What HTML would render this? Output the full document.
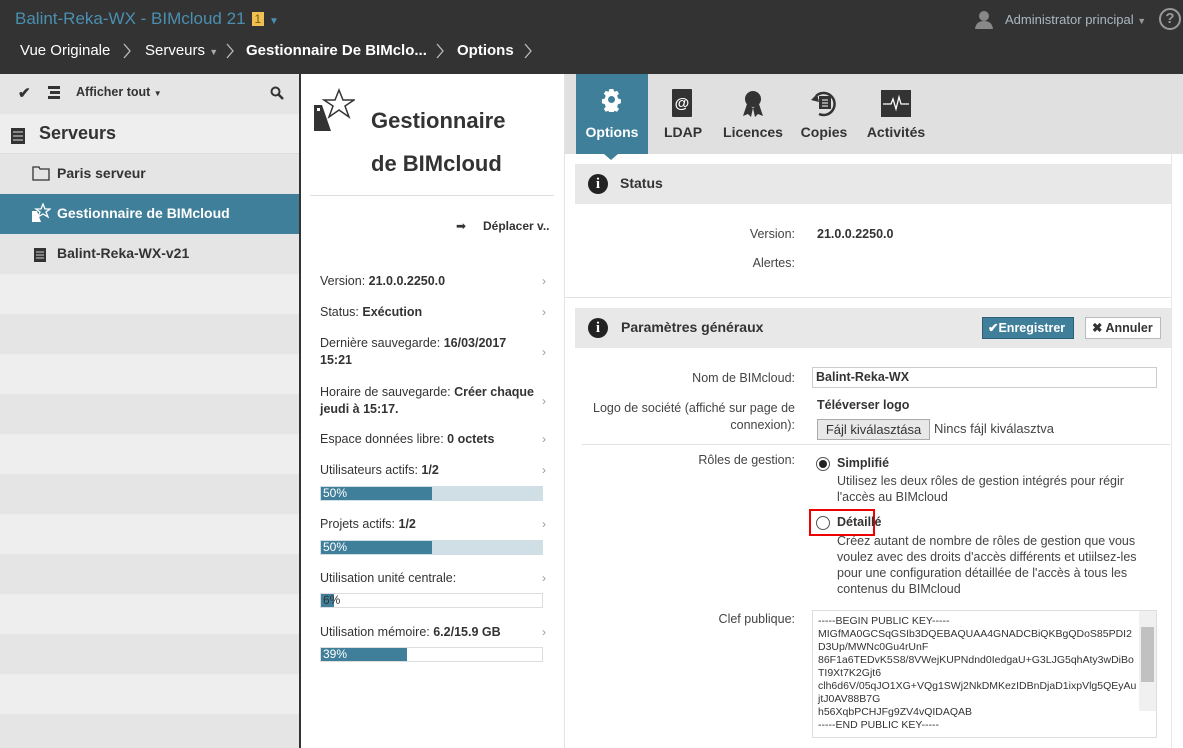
<!DOCTYPE html>
<html><head><meta charset="utf-8"><style>
*{box-sizing:border-box;margin:0;padding:0}
html,body{width:1183px;height:748px;overflow:hidden}
body{font-family:"Liberation Sans",sans-serif;font-size:13px;color:#333;background:#fff;position:relative}
.abs{position:absolute}
.hdr{left:0;top:0;width:1183px;height:74px;background:#333}
.title{left:15px;top:9px;font-size:17px;color:#4a8fb0}
.badge{display:inline-block;background:#f0c050;color:#7a5a10;font-size:12px;padding:0 3px;margin-left:6px;vertical-align:1px;line-height:14px}
.bc{top:42px;font-size:15px;color:#fff}
.chev{top:41px}
.side{left:0;top:74px;width:299px;height:674px;background:#eee}
.row{position:absolute;left:0;width:299px;height:40px}
.mid{left:301px;top:74px;width:264px;height:674px;background:#fff;border-right:1px solid #e3e3e3}
.kv{position:absolute;left:320px;width:226px;font-size:12.5px;line-height:17px}
.kv .ar{position:absolute;right:0;top:0;color:#999;font-size:12px}
.bar{position:absolute;left:320px;width:223px;height:15px;border:1px solid #ddd;background:#fff;font-size:12px;color:#fff;line-height:13px}
.bar i{display:block;height:13px;background:#3f7f9a;position:absolute;left:0;top:0}
.bar span{position:relative;padding-left:2px}
.tabs{left:565px;top:74px;width:618px;height:80px;background:#e0e0e0}
.tab{position:absolute;top:0;height:80px;text-align:center;font-size:14px;font-weight:bold;color:#333}
.tab .lb{position:absolute;top:50px;left:0;right:0}
.sec{position:absolute;left:575px;width:596px;height:40px;background:#e8e8e8}
.lbl{position:absolute;text-align:right;font-size:12.5px;color:#444;right:388px}
</style></head><body>
<div class="abs hdr"></div>
<div class="abs title">Balint-Reka-WX - BIMcloud 21<span class="badge">1</span> <span style="font-size:10px">▼</span></div>
<div class="abs bc" style="left:20px">Vue Originale</div>
<svg class="abs chev" style="left:122px" width="10" height="20"><path d="M2 3l6 7-6 7" fill="none" stroke="#bbb" stroke-width="1.3"/></svg>
<div class="abs bc" style="left:145px">Serveurs <span style="font-size:9px;color:#aaa">▼</span></div>
<svg class="abs chev" style="left:225px" width="10" height="20"><path d="M2 3l6 7-6 7" fill="none" stroke="#bbb" stroke-width="1.3"/></svg>
<div class="abs bc" style="left:246px;font-weight:bold">Gestionnaire De BIMclo...</div>
<svg class="abs chev" style="left:435px" width="10" height="20"><path d="M2 3l6 7-6 7" fill="none" stroke="#bbb" stroke-width="1.3"/></svg>
<div class="abs bc" style="left:457px;font-weight:bold">Options</div>
<svg class="abs chev" style="left:523px" width="10" height="20"><path d="M2 3l6 7-6 7" fill="none" stroke="#bbb" stroke-width="1.3"/></svg>
<svg class="abs" style="left:974px;top:10px" width="20" height="20"><circle cx="10" cy="6" r="5" fill="#888"/><path d="M1 19 Q2 11 10 11 Q18 11 19 19Z" fill="#888"/></svg>
<div class="abs" style="left:1005px;top:12px;color:#aab8c2;font-size:13px">Administrator principal <span style="font-size:9px;color:#999">▼</span></div>
<div class="abs" style="left:1159px;top:8px;width:22px;height:22px;border:2px solid #999;border-radius:50%;color:#999;text-align:center;font-size:15px;line-height:18px;font-weight:bold">?</div>

<div class="abs side">
<div class="row" style="top:0;background:#e5e5e5"></div>
<div class="row" style="top:40px;background:#eee;border-bottom:1px solid #ddd"></div>
<div class="row" style="top:80px;background:#e5e5e5"></div>
<div class="row" style="top:120px;background:#3f7f9a"></div>
<div class="row" style="top:160px;background:#e5e5e5"></div>
<div class="row" style="top:240px;background:#e5e5e5"></div>
<div class="row" style="top:320px;background:#e5e5e5"></div>
<div class="row" style="top:400px;background:#e5e5e5"></div>
<div class="row" style="top:480px;background:#e5e5e5"></div>
<div class="row" style="top:560px;background:#e5e5e5"></div>
<div class="row" style="top:640px;background:#e5e5e5"></div>
</div>
<div class="abs" style="left:299px;top:74px;width:2px;height:674px;background:#333"></div>
<div class="abs" style="left:18px;top:84px;font-size:15px;font-weight:bold">✔</div>
<svg class="abs" style="left:46px;top:86px" width="14" height="13"><rect x="2" y="0" width="12" height="3" fill="#333"/><rect x="4" y="5" width="10" height="3" fill="#333"/><rect x="2" y="10" width="12" height="3" fill="#333"/></svg>
<div class="abs" style="left:76px;top:85px;font-weight:bold;font-size:12.5px">Afficher tout <span style="font-size:8px">▼</span></div>
<svg class="abs" style="left:270px;top:86px" width="14" height="14"><circle cx="5.5" cy="5.5" r="4" stroke="#333" stroke-width="2" fill="none"/><path d="M8.5 8.5L13 13" stroke="#333" stroke-width="2.5"/></svg>
<svg class="abs" style="left:11px;top:128px" width="14" height="16"><rect width="14" height="16" fill="#333"/><path d="M2 4h10M2 8h10M2 12h10" stroke="#ddd" stroke-width="1"/></svg>
<div class="abs" style="left:39px;top:123px;font-size:18px;font-weight:bold">Serveurs</div>
<svg class="abs" style="left:32px;top:166px" width="18" height="15"><path d="M1 1h6l1 2h9v11H1Z" fill="none" stroke="#333" stroke-width="1.3"/></svg>
<div class="abs" style="left:57px;top:165px;font-size:14px;font-weight:bold">Paris serveur</div>
<svg class="abs" style="left:31px;top:203px" width="20" height="20"><path d="M1 8h5l4 11H1Z" fill="#fff"/><path d="M12 1l2 5h5l-4 3 2 5-5-3-5 3 2-5-4-3h5z" fill="none" stroke="#fff" stroke-width="1.3"/></svg>
<div class="abs" style="left:57px;top:205px;font-size:14px;font-weight:bold;color:#fff">Gestionnaire de BIMcloud</div>
<svg class="abs" style="left:34px;top:248px" width="12" height="14"><rect width="12" height="14" fill="#333"/><path d="M2 4h8M2 7h8M2 10h8" stroke="#ccc"/></svg>
<div class="abs" style="left:57px;top:245px;font-size:14px;font-weight:bold">Balint-Reka-WX-v21</div>

<div class="abs mid"></div>
<svg class="abs" style="left:313px;top:88px" width="42" height="44"><path d="M1 17h8l9 26H1Z" fill="#333"/><rect x="4" y="20" width="3" height="3" fill="#fff"/><path d="M26 2l4 10h11l-9 6 4 11-10-7-10 7 4-11-9-6h11z" fill="#fff" stroke="#333" stroke-width="1.5"/></svg>
<div class="abs" style="left:371px;top:99px;font-size:22px;font-weight:bold;line-height:43px">Gestionnaire<br>de BIMcloud</div>
<div class="abs" style="left:310px;top:195px;width:244px;height:1px;background:#ddd"></div>
<div class="abs" style="left:456px;top:219px;font-size:12px">➡</div>
<div class="abs" style="left:483px;top:219px;font-size:12px;font-weight:bold">Déplacer v..</div>
<div class="kv" style="top:273px">Version: <b>21.0.0.2250.0</b><span class="ar">›</span></div>
<div class="kv" style="top:304px">Status: <b>Exécution</b><span class="ar">›</span></div>
<div class="kv" style="top:335px">Dernière sauvegarde: <b>16/03/2017<br>15:21</b><span class="ar" style="top:9px">›</span></div>
<div class="kv" style="top:384px">Horaire de sauvegarde: <b>Créer chaque jeudi à 15:17.</b><span class="ar" style="top:9px">›</span></div>
<div class="kv" style="top:431px">Espace données libre: <b>0 octets</b><span class="ar">›</span></div>
<div class="kv" style="top:462px">Utilisateurs actifs: <b>1/2</b><span class="ar">›</span></div>
<div class="bar" style="top:486px;background:#d0dfe5;border-color:#d0dfe5"><i style="width:111px"></i><span>50%</span></div>
<div class="kv" style="top:516px">Projets actifs: <b>1/2</b><span class="ar">›</span></div>
<div class="bar" style="top:540px;background:#d0dfe5;border-color:#d0dfe5"><i style="width:111px"></i><span>50%</span></div>
<div class="kv" style="top:570px">Utilisation unité centrale:<span class="ar">›</span></div>
<div class="bar" style="top:593px"><i style="width:13px"></i><span style="color:#333">6%</span></div>
<div class="kv" style="top:624px">Utilisation mémoire: <b>6.2/15.9 GB</b><span class="ar">›</span></div>
<div class="bar" style="top:647px"><i style="width:86px"></i><span>39%</span></div>

<div class="abs tabs"></div>
<div class="tab" style="left:576px;width:72px;background:#3f7f9a;color:#fff;top:74px"><svg style="position:absolute;left:24px;top:14px" width="24" height="24" viewBox="0 0 24 24"><path d="M10 1h4l1 3 3-1 2 3-2 2 1 3 3 1v4l-3 1-1 3 2 2-2 3-3-1-1 3h-4l-1-3-3 1-2-3 2-2-1-3-3-1v-4l3-1 1-3-2-2 2-3 3 1z" fill="#fff" transform="scale(0.95)"/><circle cx="11.5" cy="11.5" r="3.5" fill="#3f7f9a"/></svg><div class="lb">Options</div></div>
<div class="abs" style="left:604px;top:154px;border:7px solid transparent;border-top:6px solid #3f7f9a;border-bottom:0"></div>
<div class="tab" style="left:658px;width:50px;top:74px"><svg style="position:absolute;left:12px;top:14px" width="24" height="30"><rect x="2" y="1" width="20" height="28" rx="1" fill="#333"/><text x="12" y="20" font-size="15" font-weight="bold" fill="#fff" text-anchor="middle" font-family="Liberation Sans">@</text></svg><div class="lb">LDAP</div></div>
<div class="tab" style="left:720px;width:66px;top:74px"><svg style="position:absolute;left:22px;top:16px" width="22" height="28"><circle cx="11" cy="9" r="8" fill="#333"/><path d="M5 14l-4 12 5-2 3 3 2-9zM17 14l4 12-5-2-3 3-2-9z" fill="#333"/></svg><div class="lb">Licences</div></div>
<div class="tab" style="left:798px;width:52px;top:74px"><svg style="position:absolute;left:12px;top:14px" width="28" height="30"><path d="M6 8A11 11 0 1 1 9 26" fill="none" stroke="#333" stroke-width="2.5"/><path d="M1 12l6-6 2 8z" fill="#333"/><rect x="9" y="8" width="12" height="13" fill="#333"/><path d="M12 12h6M12 15h6M12 18h6" stroke="#fff"/></svg><div class="lb">Copies</div></div>
<div class="tab" style="left:862px;width:68px;top:74px"><svg style="position:absolute;left:19px;top:16px" width="30" height="27"><rect width="30" height="27" fill="#333"/><path d="M2 14h8l2-5 3 10 3-12 2 7h8" fill="none" stroke="#fff" stroke-width="1.3"/></svg><div class="lb">Activités</div></div>

<div class="sec" style="top:164px"></div>
<div class="abs" style="left:588px;top:174px;width:20px;height:20px;border-radius:50%;background:#222;color:#fff;text-align:center;font-weight:bold;font-family:'Liberation Serif',serif;font-size:15px;line-height:20px">i</div>
<div class="abs" style="left:620px;top:175px;font-size:14px;font-weight:bold">Status</div>
<div class="lbl" style="top:227px">Version:</div>
<div class="abs" style="left:817px;top:227px;font-size:12.5px;font-weight:bold">21.0.0.2250.0</div>
<div class="lbl" style="top:256px">Alertes:</div>
<div class="abs" style="left:565px;top:297px;width:606px;height:1px;background:#e3e3e3"></div>
<div class="sec" style="top:308px"></div>
<div class="abs" style="left:588px;top:318px;width:20px;height:20px;border-radius:50%;background:#222;color:#fff;text-align:center;font-weight:bold;font-family:'Liberation Serif',serif;font-size:15px;line-height:20px">i</div>
<div class="abs" style="left:621px;top:319px;font-size:14px;font-weight:bold">Paramètres généraux</div>
<div class="abs" style="left:982px;top:317px;width:92px;height:22px;background:#3f7f9a;border:1px solid #2d5f75;color:#fff;font-weight:bold;font-size:12.5px;line-height:20px;padding-left:5px">✔Enregistrer</div>
<div class="abs" style="left:1085px;top:317px;width:76px;height:22px;background:#fff;border:1px solid #bbb;font-weight:bold;font-size:12.5px;line-height:20px;padding-left:6px">✖ Annuler</div>
<div class="lbl" style="top:371px">Nom de BIMcloud:</div>
<div class="abs" style="left:812px;top:367px;width:345px;height:21px;border:1px solid #ccc;font-weight:bold;font-size:12.5px;line-height:19px;padding-left:3px">Balint-Reka-WX</div>
<div class="lbl" style="top:400px;line-height:17px">Logo de société (affiché sur page de<br>connexion):</div>
<div class="abs" style="left:817px;top:398px;font-weight:bold;font-size:12.5px">Téléverser logo</div>
<div class="abs" style="left:817px;top:419px;width:113px;height:21px;border:1px solid #aaa;background:#e8e8e8;font-size:13px;line-height:19px;text-align:center">Fájl kiválasztása</div>
<div class="abs" style="left:934px;top:421px;font-size:13px;color:#444">Nincs fájl kiválasztva</div>
<div class="abs" style="left:582px;top:444px;width:588px;height:1px;background:#e3e3e3"></div>
<div class="lbl" style="top:453px">Rôles de gestion:</div>
<div class="abs" style="left:816px;top:457px;width:14px;height:14px;border:1px solid #555;border-radius:50%"><div style="margin:2px;width:8px;height:8px;border-radius:50%;background:#222"></div></div>
<div class="abs" style="left:837px;top:456px;font-weight:bold;font-size:12.5px">Simplifié</div>
<div class="abs" style="left:837px;top:473px;font-size:12.5px;line-height:16px;color:#444;width:320px">Utilisez les deux rôles de gestion intégrés pour régir l'accès au BIMcloud</div>
<div class="abs" style="left:809px;top:509px;width:66px;height:27px;border:2px solid #e00"></div>
<div class="abs" style="left:816px;top:516px;width:14px;height:14px;border:1px solid #555;border-radius:50%"></div>
<div class="abs" style="left:837px;top:515px;font-weight:bold;font-size:12.5px">Détaillé</div>
<div class="abs" style="left:837px;top:533px;font-size:12.5px;line-height:16px;color:#444;width:310px">Créez autant de nombre de rôles de gestion que vous voulez avec des droits d'accès différents et utiilsez-les pour une configuration détaillée de l'accès à tous les contenus du BIMcloud</div>
<div class="lbl" style="top:612px">Clef publique:</div>
<div class="abs" style="left:812px;top:610px;width:345px;height:128px;border:1px solid #ddd;overflow:hidden;font-size:10.5px;line-height:13px;color:#333;padding:4px 18px 0 5px;word-break:break-all">-----BEGIN PUBLIC KEY-----<br>MIGfMA0GCSqGSIb3DQEBAQUAA4GNADCBiQKBgQDoS85PDI2D3Up/MWNc0Gu4rUnF<br>86F1a6TEDvK5S8/8VWejKUPNdnd0IedgaU+G3LJG5qhAty3wDiBoTI9Xt7K2Gjt6<br>clh6d6V/05qJO1XG+VQg1SWj2NkDMKezIDBnDjaD1ixpVlg5QEyAujtJ0AV88B7G<br>h56XqbPCHJFg9ZV4vQIDAQAB<br>-----END PUBLIC KEY-----</div>
<div class="abs" style="left:1139px;top:611px;width:17px;height:100px;background:#f0f0f0"></div>
<div class="abs" style="left:1141px;top:627px;width:13px;height:55px;background:#c1c1c1"></div>
<div class="abs" style="left:1171px;top:154px;width:12px;height:594px;background:#fff;border-left:1px solid #e8e8e8"></div>
</body></html>
